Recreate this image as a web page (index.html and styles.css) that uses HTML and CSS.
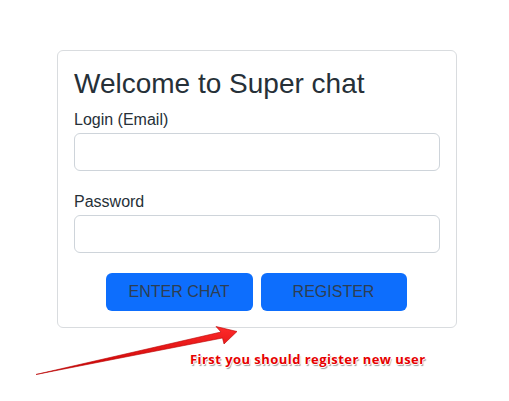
FILE: index.html
```html
<!DOCTYPE html>
<html lang="en">
<head>
<meta charset="utf-8">
<title>Super chat</title>
<link rel="stylesheet" href="styles.css">
</head>
<body>
<div class="page">
  <form class="card">
    <h1 class="title">Welcome to Super chat</h1>
    <div class="group">
      <label class="label" for="login">Login (Email)</label>
      <input class="input" id="login" type="email">
    </div>
    <div class="group">
      <label class="label" for="pass">Password</label>
      <input class="input" id="pass" type="password">
    </div>
    <div class="actions">
      <button type="button" class="btn">Enter chat</button>
      <button type="button" class="btn">Register</button>
    </div>
  </form>
  <svg class="arrow" width="509" height="401" viewBox="0 0 509 401" aria-hidden="true">
    <defs>
      <linearGradient id="ag" x1="0" y1="0" x2="0" y2="1">
        <stop offset="0" stop-color="#ff2a2a"/>
        <stop offset="1" stop-color="#c40000"/>
      </linearGradient>
    </defs>
    <polygon points="36,374.5 221,332 216,326.5 237,331.5 224,344 222.5,338" fill="url(#ag)" stroke="#b80000" stroke-width="0.6" stroke-linejoin="round"/>
  </svg>
  <div class="note">First you should register new user</div>
</div>
</body>
</html>
```
FILE: styles.css
```css
html, body {
  margin: 0;
  padding: 0;
  background: #ffffff;
}
body {
  font-family: "Liberation Sans", Arial, sans-serif;
  color: #263038;
}
.page {
  position: relative;
  width: 509px;
  height: 401px;
  padding: 50px 0 0 57px;
  box-sizing: border-box;
}
.card {
  width: 400px;
  box-sizing: border-box;
  border: 1px solid #d9dcdf;
  border-radius: 6px;
  padding: 16px 16px 16px;
  display: flex;
  flex-direction: column;
}
.title {
  margin: 0 0 7px;
  font-size: 28px;
  line-height: 33.6px;
  font-weight: 400;
  color: #263038;
}
.group {
  display: flex;
  flex-direction: column;
  margin-bottom: 19px;
}
.label {
  font-size: 16px;
  line-height: 24px;
  margin-bottom: 1px;
  color: #263038;
}
.input {
  height: 38px;
  box-sizing: border-box;
  border: 1px solid #ced4da;
  border-radius: 6px;
  padding: 6px 12px;
  font: inherit;
  margin: 0;
}
.actions {
  display: flex;
  justify-content: center;
  gap: 8px;
  margin-top: 1px;
  padding-right: 2px;
}
.btn {
  width: 147px;
  height: 38px;
  border: none;
  border-radius: 6px;
  background: #0d6efd;
  color: #2d3e52;
  font-family: "Liberation Sans", Arial, sans-serif;
  font-size: 16px;
  text-transform: uppercase;
  padding: 0;
  cursor: pointer;
}
.btn + .btn {
  width: 146px;
}
.arrow {
  position: absolute;
  left: 0;
  top: 0;
  pointer-events: none;
}
.note {
  position: absolute;
  left: 190px;
  top: 350px;
  font-family: "Open Sans", sans-serif;
  font-weight: 700;
  font-size: 13px;
  line-height: 18px;
  letter-spacing: 0.45px;
  color: #e60000;
  text-shadow: -1px 0 #fff, 1px 0 #fff, 0 -1px #fff, 0 1px #fff, 1px 2px 1px #9a9a9a;
}
```
